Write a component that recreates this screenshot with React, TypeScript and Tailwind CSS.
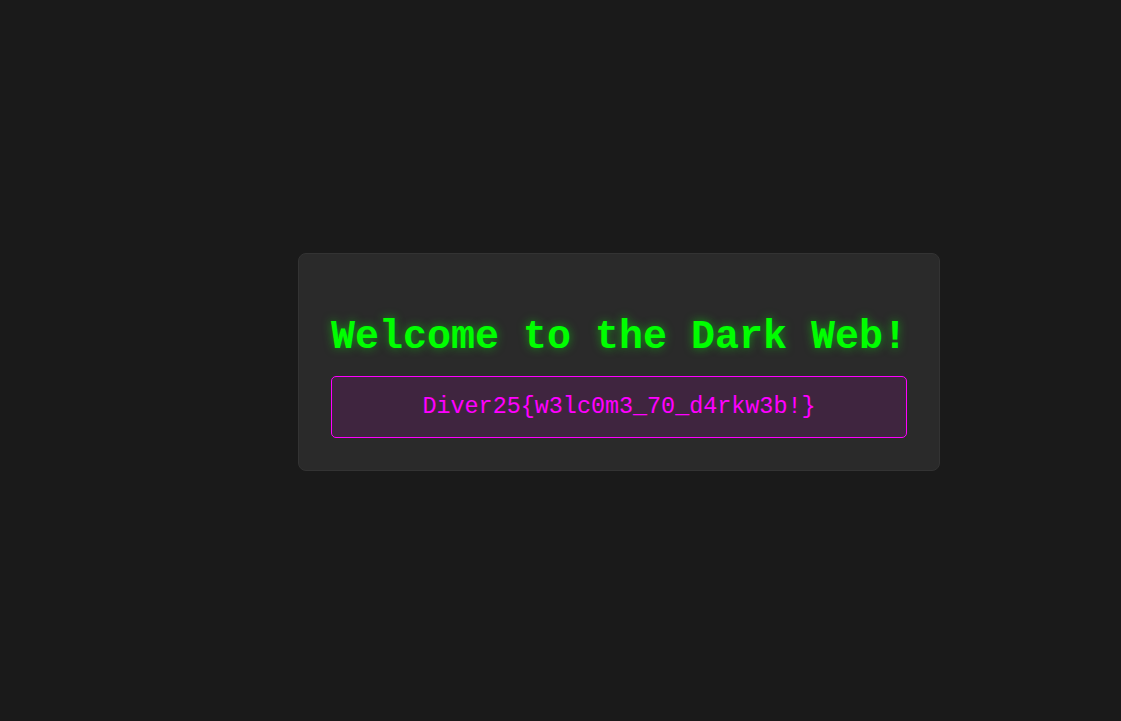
const App = () => {
  return (
    <div className="min-h-screen bg-[#1a1a1a] flex items-center justify-center pl-[117px] pt-[3px] font-['Liberation_Mono',monospace]">
      <div className="bg-[#2a2a2a] border border-[#333333] rounded-lg p-8">
        {/* Heading */}
        <h1 className="text-[40px] leading-[normal] font-bold text-[#00ff00] mt-[29px] mb-4 [text-shadow:0_0_10px_rgba(0,255,0,0.5)]">
          Welcome to the Dark Web!
        </h1>

        {/* Flag */}
        <div className="border border-[#ff00ff] bg-[rgba(255,0,255,0.1)] rounded-[5px] px-4 py-4 text-center text-[23.4px] leading-[28px] text-[#ff00ff]">
          Diver25{'{'}w3lc0m3_70_d4rkw3b!{'}'}
        </div>
      </div>
    </div>
  );
};

export default App;
